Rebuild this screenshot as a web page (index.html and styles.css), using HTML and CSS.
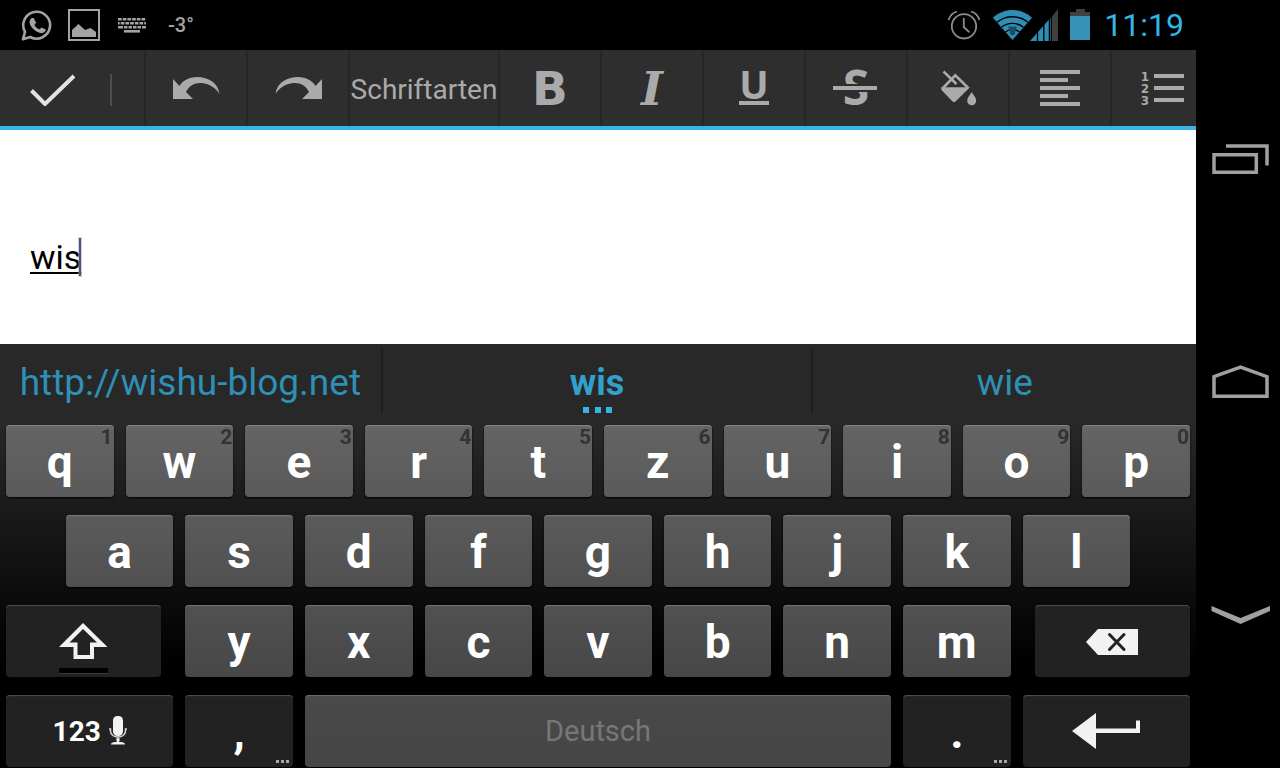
FILE: index.html
```html
<!DOCTYPE html>
<html lang="de">
<head>
  <meta charset="UTF-8">
  <meta name="viewport" content="width=device-width, initial-scale=1.0">
  <title>Editor</title>
  <link rel="stylesheet" href="styles.css">
</head>
<body>
  <div class="screen">
    <header class="status-bar">
      <svg width="32" height="32" viewBox="0 0 32 32" fill="none" stroke="#a3a3a3">
        <path stroke-width="2.6" stroke-linejoin="round" d="M3 30.200l2-7.400A13.400 13.400 0 1 1 10.300 28z"></path>
        <path fill="#a3a3a3" stroke="none" d="M12 9h1.700l2.400 4.700-1.700 2.200c1.200 2.300 2.900 3.700 5.200 4.400l2-1.900 4.200 2.200c.1 1.800-2 3.600-4.200 3.600-5.300-.4-11.200-5.500-12.100-10.600-.2-1.800.8-3.700 2.500-4.600z"></path>
      </svg>
      <svg width="32" height="32" viewBox="0 0 32 32">
        <rect x="1" y="1" width="30" height="30" fill="none" stroke="#a3a3a3" stroke-width="2"></rect>
        <path fill="#a3a3a3" d="M4 28v-7l6.500-6 6.500 6 5.500-2 5.500 4v5z"></path>
      </svg>
      <svg width="36" height="32" viewBox="0 0 36 32" stroke="#a3a3a3" stroke-width="2.600">
        <path stroke-dasharray="3.700 1" d="M2 10.300h28"></path>
        <path stroke-dasharray="3.700 1" stroke-dashoffset="2" d="M2 14.300h28"></path>
        <path stroke-dasharray="5 1 3.500 1 3.500 1 3.500 1 3.500 1 4" d="M2 18.300h28"></path>
        <path d="M8 22.300h16"></path>
      </svg>
      <span class="temperature">-3°</span>
      <div class="status-right">
        <svg width="34" height="32" viewBox="-2 0 34 32" fill="none" stroke="#8c8c8c" stroke-width="1.800">
          <circle cx="16" cy="17.300" r="12.200"></circle>
          <path d="M15.800 9v9l5.600 5.400M.5 11C2 6.500 5 3.500 9 2.500M23 2.500c4 1 7 4 8.500 8.500"></path>
        </svg>
        <svg width="66" height="32" viewBox="0 0 66 32">
          <path fill="#2f8db6" d="M20.400 31 1 8.700C12-1.500 29-1.500 40 8.700z"></path>
          <path fill="none" stroke="#000" stroke-width="1.300" d="M5 13.300c9-7.400 22-7.400 31 0M9.500 18.300c6.400-5.200 15.600-5.200 22 0M13.500 23c4-3.400 10-3.400 14 0"></path>
          <path fill="#1b4d63" d="M16 17.500h9l-1.500 3.500-1 5h-4l-1-5z"></path>
          <path fill="#2f8db6" d="M38 32 58.700 8.500V32z"></path>
          <path stroke="#000" stroke-width="1.300" d="M45.500 20v12M51.800 14v18M57.400 8v24"></path>
          <path fill="#404040" d="M60 7.500 66 0v32h-6z"></path>
        </svg>
        <svg width="20" height="32" viewBox="0 0 20 32">
          <path fill="#404040" d="M6 0h9v3h5v5H0V3h6z"></path>
          <path fill="#3892b8" d="M0 7h20v24H0z"></path>
        </svg>
        <time class="clock">11:19</time>
      </div>
    </header>

    <div class="toolbar">
      <button class="tool tool-done" aria-label="Fertig">
        <svg width="46" height="32" viewBox="0 0 46 32" fill="none" stroke="#e3e3e3" stroke-width="4"><path d="M1.500 16.500 15 30 44 2"></path></svg>
      </button>
      <button class="tool" aria-label="Rückgängig">
        <svg width="48" height="28" viewBox="0 0 48 28"><path fill="#aaa" d="M1 5v20h20l-7-7c3-6.500 9-9.500 15.500-9C38 10 44 14 47.500 20 46 8 35 3 25 3 17 3 10 7 7.500 12z"></path></svg>
      </button>
      <button class="tool" aria-label="Wiederholen">
        <svg width="48" height="28" viewBox="0 0 48 28"><path fill="#aaa" d="M48 5v20H28l7-7c-3-6.500-9-9.500-15.500-9C11 10 5 14 1.500 20 3 8 14 3 24 3c8 0 15 4 17.500 9z"></path></svg>
      </button>
      <button class="tool tool-fonts">Schriftarten</button>
      <button class="tool" aria-label="Fett">
        <svg class="glyph" width="48" height="48" viewBox="0 0 48 48"><text x="24" y="41">B</text></svg>
      </button>
      <button class="tool" aria-label="Kursiv">
        <svg class="glyph glyph-italic" width="48" height="48" viewBox="0 0 48 48"><text x="24" y="41">I</text></svg>
      </button>
      <button class="tool" aria-label="Unterstrichen">
        <svg class="glyph glyph-underline" width="48" height="48" viewBox="0 0 48 48"><text x="24" y="35">U</text><path d="M9 37h30v4H9z"></path></svg>
      </button>
      <button class="tool" aria-label="Durchgestrichen">
        <svg class="glyph glyph-strike" width="48" height="48" viewBox="0 0 48 48"><text x="24" y="41">S</text><path fill="#2e2e2e" d="M0 20h48v8H0z"></path><path d="M1 22h44v4H1z"></path></svg>
      </button>
      <button class="tool" aria-label="Füllfarbe">
        <svg width="48" height="48" viewBox="0 0 48 48" fill="#aaa">
          <path fill="none" stroke="#aaa" stroke-width="2.600" d="M9 24 21.300 11.300 34 23.700M9.500 7.500l13 12.500"></path>
          <path d="M7 23.300h29L21.500 37.500q-1.500 1-3 0L7.500 26z"></path>
          <path d="M37.700 28c2.500 4 4.500 6 4.500 8.700a4.500 4.500 0 0 1-9 0c0-2.700 2-4.700 4.500-8.700z"></path>
        </svg>
      </button>
      <button class="tool" aria-label="Linksbündig">
        <svg width="48" height="48" viewBox="0 0 48 48" fill="#aaa"><path d="M4 6h40v4H4zM4 14h28v4H4zM4 22h40v4H4zM4 30h28v4H4zM4 38h40v4H4z"></path></svg>
      </button>
      <button class="tool" aria-label="Nummerierte Liste">
        <svg class="glyph glyph-list" width="48" height="48" viewBox="0 0 48 48"><text x="7" y="17">1</text><text x="7" y="29">2</text><text x="7" y="41">3</text><path d="M16 10h30v4H16zM16 22h30v4H16zM16 34h30v4H16z"></path></svg>
      </button>
    </div>

    <main class="editor">
      <textarea class="editor-text" aria-label="Text" spellcheck="false">wis</textarea>
      <span class="caret"></span>
    </main>

    <section class="keyboard">
      <div class="suggestions">
        <button class="suggestion">http://wishu-blog.net</button>
        <button class="suggestion suggestion-main">wis
          <svg class="more" width="30" height="6" viewBox="0 0 30 6"><path fill="#33b5e5" d="M0 0h6v6H0zM12 0h6v6h-6zM23 0h6v6h-6z"></path></svg>
        </button>
        <button class="suggestion">wie</button>
      </div>
      <div class="keys">
        <div class="row row-1">
          <button class="key">q<span class="hint">1</span></button>
          <button class="key">w<span class="hint">2</span></button>
          <button class="key">e<span class="hint">3</span></button>
          <button class="key">r<span class="hint">4</span></button>
          <button class="key">t<span class="hint">5</span></button>
          <button class="key">z<span class="hint">6</span></button>
          <button class="key">u<span class="hint">7</span></button>
          <button class="key">i<span class="hint">8</span></button>
          <button class="key">o<span class="hint">9</span></button>
          <button class="key">p<span class="hint">0</span></button>
        </div>
        <div class="row row-2">
          <button class="key">a</button>
          <button class="key">s</button>
          <button class="key">d</button>
          <button class="key">f</button>
          <button class="key">g</button>
          <button class="key">h</button>
          <button class="key">j</button>
          <button class="key">k</button>
          <button class="key">l</button>
        </div>
        <div class="row row-3">
          <button class="key key-dark key-shift" aria-label="Umschalt">
            <svg width="50" height="72" viewBox="0 0 50 72">
              <path fill="#f2f2f2" fill-rule="evenodd" d="M24 18 48.500 42H35v12H14.500V42H0zM24 24 10.500 37.500h8V50H31V37.500h7z"></path>
              <path fill="#000" d="M0 63h49v5H0z"></path>
              <path fill="#3a3a3a" d="M0 68h49v1H0z"></path>
            </svg>
          </button>
          <button class="key">y</button>
          <button class="key">x</button>
          <button class="key">c</button>
          <button class="key">v</button>
          <button class="key">b</button>
          <button class="key">n</button>
          <button class="key">m</button>
          <button class="key key-dark key-delete" aria-label="Löschen">
            <svg width="52" height="26" viewBox="0 0 52 26">
              <path fill="#f2f2f2" d="M12 0h40v26H12L0 13z"></path>
              <path stroke="#222" stroke-width="3" stroke-linecap="round" d="m23.500 5.500 14.500 15M38 5.500l-14.500 15"></path>
            </svg>
          </button>
        </div>
        <div class="row row-4">
          <button class="key key-dark key-wide key-symbols">123
            <svg width="18" height="30" viewBox="0 0 18 30">
              <rect x="4" y="0" width="10" height="20" rx="4.500" fill="#f2f2f2"></rect>
              <path fill="none" stroke="#d8d8d8" stroke-width="1.500" d="M0 13h1.500v2c0 8 15 8 15 0v-2H18M9 21v6"></path>
              <path fill="#f2f2f2" d="M7 22.500h4L10 26c3 0 6 .5 6 2.500H2C2 26.500 5 26 8 26z"></path>
            </svg>
          </button>
          <button class="key key-dark">,<svg class="dots" width="13" height="3" viewBox="0 0 13 3"><path fill="#aaa" d="M0 0h3v3H0zM5 0h3v3H5zM10 0h3v3h-3z"></path></svg></button>
          <button class="key key-space">Deutsch</button>
          <button class="key key-dark">.<svg class="dots" width="13" height="3" viewBox="0 0 13 3"><path fill="#aaa" d="M0 0h3v3H0zM5 0h3v3H5zM10 0h3v3h-3z"></path></svg></button>
          <button class="key key-dark key-wide" aria-label="Eingabe">
            <svg width="68" height="36" viewBox="0 0 68 36"><path fill="#f2f2f2" d="M0 18 24 0v15.500h40v-8h4V20H24v16z"></path></svg>
          </button>
        </div>
      </div>
    </section>
  </div>

  <nav class="nav-bar">
    <button class="nav-button" aria-label="Letzte Apps">
      <svg width="64" height="48" viewBox="0 0 64 48"><path d="M8 19.700h42.300v17.500H8zM20 11h41v19.500"></path></svg>
    </button>
    <button class="nav-button" aria-label="Startseite">
      <svg width="64" height="48" viewBox="0 0 64 48"><path d="M8 13.700 34.500 4 61 13.700v19.500H8z"></path></svg>
    </button>
    <button class="nav-button" aria-label="Zurück">
      <svg width="64" height="48" viewBox="0 0 64 48"><path class="solid" d="M5.500 15 34.500 27 64 15v5L34.500 33l-29-13z"></path></svg>
    </button>
  </nav>
</body>
</html>
```

FILE: styles.css
```css
:root {
  --holo: #33b5e5;
  --icon: #aaa;
  --bar: #2e2e2e;
}

*, ::after, ::before {
  box-sizing: border-box;
}

body {
  margin: 0;
  min-height: 100vh;
  display: flex;
  background: #000;
  color: #fff;
  font-family: Roboto, "Liberation Sans", sans-serif;
}

button {
  margin: 0;
  padding: 0;
  border: 0;
  background: none;
  color: inherit;
  font: inherit;
  cursor: pointer;
}

svg {
  display: block;
  flex: none;
}

.screen {
  flex: 1;
  min-width: 0;
  display: flex;
  flex-direction: column;
}

/* status bar */
.status-bar {
  height: 50px;
  padding: 0 12px 0 20px;
  display: flex;
  align-items: center;
  gap: 16px;
}

.temperature {
  color: #a3a3a3;
  font-size: 20px;
  font-weight: 500;
}

.status-right {
  margin-left: auto;
  display: flex;
  align-items: center;
  gap: 12px;
}

.clock {
  margin-left: 2px;
  color: var(--holo);
  font-size: 32px;
}

/* formatting toolbar */
.toolbar {
  height: 80px;
  display: flex;
  overflow: hidden;
  background: var(--bar);
  border-bottom: 4px solid var(--holo);
}

.tool {
  flex: none;
  width: 102px;
  display: flex;
  align-items: center;
  justify-content: center;
  border-right: 2px solid #262626;
}

.tool-done {
  width: 146px;
  padding: 4px 32px 0 30px;
  justify-content: space-between;
}

.tool-done::after {
  content: "";
  width: 2px;
  height: 32px;
  background: #4d4d4d;
}

.tool-fonts {
  width: 150px;
  padding-top: 2px;
  color: var(--icon);
  font-size: 28px;
}

.glyph {
  overflow: visible;
  fill: var(--icon);
  font: bold 47px "DejaVu Sans", sans-serif;
  text-anchor: middle;
}

.glyph-italic {
  font: italic bold 47px "DejaVu Serif", serif;
}

.glyph-underline {
  font: bold 39px "Open Sans", sans-serif;
}

.glyph-strike {
  font: bold 48px "Open Sans", sans-serif;
}

.glyph-list {
  font-size: 12px;
}

/* document */
.editor {
  flex: 1;
  position: relative;
  display: flex;
  background: #fff;
}

.editor-text {
  flex: 1;
  padding: 107px 30px 0;
  border: 0;
  outline: 0;
  resize: none;
  background: none;
  color: #000;
  font: 34px/40px Roboto, "Liberation Sans", sans-serif;
  text-decoration: underline 2px;
  text-decoration-skip-ink: none;
  text-underline-offset: 3px;
}

.caret {
  position: absolute;
  left: 79px;
  top: 108px;
  width: 2px;
  height: 38px;
  background: #556;
  box-shadow: 0 0 0 1px rgba(140, 165, 230, 0.5);
}

/* keyboard */
.keyboard {
  padding-bottom: 1px;
  background: linear-gradient(#282828 0%, #282828 19%, #1c1c1c 36%, #0f0f0f 55%, #000 76%);
}

.suggestions {
  display: grid;
  grid-template-columns: 32fr 36fr 32fr;
  padding: 4px 0 12px;
}

.suggestion {
  position: relative;
  height: 65px;
  border-right: 2px solid #1f1f1f;
  color: #2f8fb5;
  font-size: 37px;
  line-height: 70px;
}

.suggestion:last-child {
  border-right: 0;
}

.suggestion-main {
  color: #31a1cc;
  font-size: 36px;
  font-weight: bold;
}

.more {
  position: absolute;
  left: calc(50% - 14px);
  bottom: 0;
}

.keys {
  display: grid;
  gap: 18px;
}

.row {
  --top: #646464;
  --bottom: #5a5a5a;
  --edge: #858585;
  display: grid;
  grid-template-columns: repeat(20, 1fr);
}

.row-2 {
  --top: #5b5b5b;
  --bottom: #505050;
  --edge: #7c7c7c;
}

.row-3 {
  --top: #515151;
  --bottom: #474747;
  --edge: #757575;
}

.row-4 {
  --top: #494949;
  --bottom: #464646;
  --edge: #6e6e6e;
}

.key {
  position: relative;
  grid-column: span 2;
  height: 72px;
  margin: 0 6px;
  padding-top: 2px;
  display: flex;
  align-items: center;
  justify-content: center;
  border-radius: 4px;
  background: linear-gradient(var(--top), var(--bottom));
  box-shadow: inset 0 2px 1px -1px var(--edge), 0 1px 2px #000;
  font-size: 46px;
  font-weight: bold;
}

.row-2 .key:first-child {
  grid-column: 2 / span 2;
}

.key-dark {
  --edge: #505050;
  background: #222;
}

.row .key-shift {
  grid-column: span 3;
  margin-right: 18px;
  padding-top: 0;
}

.row .key-delete {
  grid-column: span 3;
  margin-left: 18px;
}

.key-wide {
  grid-column: span 3;
  padding-top: 0;
}

.key-symbols {
  gap: 8px;
  font-size: 28px;
}

.key-space {
  grid-column: span 10;
  padding-top: 0;
  color: #777;
  font-size: 29px;
  font-weight: normal;
}

.hint {
  position: absolute;
  top: 0;
  right: 1px;
  color: #333;
  font-size: 21px;
  line-height: 24px;
}

.dots {
  position: absolute;
  right: 4px;
  bottom: 4px;
}

/* system navigation */
.nav-bar {
  width: 84px;
  padding: 45px 0 39px;
  display: flex;
  flex-direction: column;
}

.nav-button {
  flex: 1;
  display: flex;
  align-items: center;
  justify-content: center;
}

.nav-button path {
  fill: none;
  stroke: #a0a0a0;
  stroke-width: 3.5px;
}

.nav-button .solid {
  fill: #a0a0a0;
  stroke: none;
}
```
